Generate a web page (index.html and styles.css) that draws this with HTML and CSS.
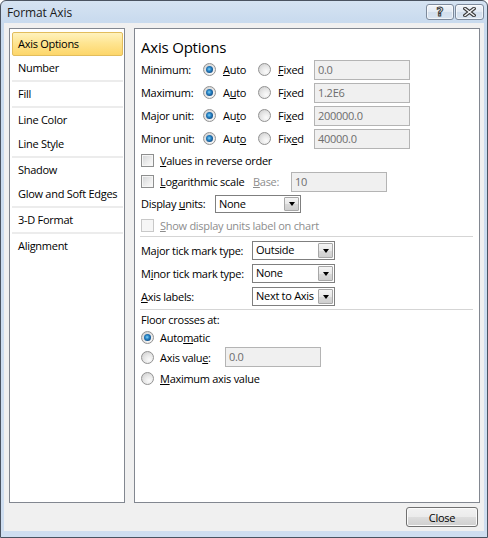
FILE: index.html
```html
<!DOCTYPE html>
<html>
<head>
<meta charset="utf-8">
<title>Format Axis</title>
<link rel="stylesheet" href="styles.css">
</head>
<body>
<div class="window">
  <div class="titlebar">
    <span class="title">Format Axis</span>
    <div class="caption-btns">
      <div class="cbtn help"><span class="qmark">?</span></div>
      <div class="cbtn closex">
        <svg width="13" height="10" viewBox="0 0 13 10">
          <path d="M2 1.5 L11 8.5 M11 1.5 L2 8.5" stroke="#3b3b3b" stroke-width="3.6" stroke-linecap="square" fill="none"/>
          <path d="M2 1.5 L11 8.5 M11 1.5 L2 8.5" stroke="#f4f6f9" stroke-width="1.4" stroke-linecap="square" fill="none"/>
        </svg>
      </div>
    </div>
  </div>
  <div class="client">
    <div class="panels">
      <div class="nav">
        <div class="item selected">Axis Options</div>
        <div class="item">Number</div>
        <div class="nsep"></div>
        <div class="item">Fill</div>
        <div class="nsep"></div>
        <div class="item">Line Color</div>
        <div class="item">Line Style</div>
        <div class="nsep"></div>
        <div class="item">Shadow</div>
        <div class="item">Glow and Soft Edges</div>
        <div class="nsep"></div>
        <div class="item">3-D Format</div>
        <div class="nsep"></div>
        <div class="item">Alignment</div>
      </div>
      <div class="content">
        <div class="heading">Axis Options</div>

        <div class="arow">
          <span class="alabel">Minimum:</span>
          <span class="opt auto"><span class="radio checked"></span><span><u>A</u>uto</span></span>
          <span class="opt fixed"><span class="radio"></span><span><u>F</u>ixed</span></span>
          <span class="field">0.0</span>
        </div>
        <div class="arow">
          <span class="alabel">Maximum:</span>
          <span class="opt auto"><span class="radio checked"></span><span>A<u>u</u>to</span></span>
          <span class="opt fixed"><span class="radio"></span><span>F<u>i</u>xed</span></span>
          <span class="field">1.2E6</span>
        </div>
        <div class="arow">
          <span class="alabel">Major unit:</span>
          <span class="opt auto"><span class="radio checked"></span><span>Au<u>t</u>o</span></span>
          <span class="opt fixed"><span class="radio"></span><span>Fi<u>x</u>ed</span></span>
          <span class="field">200000.0</span>
        </div>
        <div class="arow">
          <span class="alabel">Minor unit:</span>
          <span class="opt auto"><span class="radio checked"></span><span>Aut<u>o</u></span></span>
          <span class="opt fixed"><span class="radio"></span><span>Fix<u>e</u>d</span></span>
          <span class="field">40000.0</span>
        </div>

        <div class="crow">
          <span class="check"></span><span class="ctext"><u>V</u>alues in reverse order</span>
        </div>
        <div class="crow">
          <span class="check"></span><span class="ctext log"><u>L</u>ogarithmic scale</span>
          <span class="base disabled"><u>B</u>ase:</span>
          <span class="field">10</span>
        </div>
        <div class="drow">
          <span class="dlabel">Display <u>u</u>nits:</span>
          <span class="combo units"><span class="val">None</span><span class="arrow"><span class="tri"></span></span></span>
        </div>
        <div class="srow">
          <span class="check off"></span><span class="ctext disabled"><u>S</u>how display units label on chart</span>
        </div>

        <div class="sep first"></div>

        <div class="trow">
          <span class="tlabel">Ma<u>j</u>or tick mark type:</span>
          <span class="combo tick"><span class="val">Outside</span><span class="arrow"><span class="tri"></span></span></span>
        </div>
        <div class="trow">
          <span class="tlabel">M<u>i</u>nor tick mark type:</span>
          <span class="combo tick"><span class="val">None</span><span class="arrow"><span class="tri"></span></span></span>
        </div>
        <div class="trow">
          <span class="tlabel"><u>A</u>xis labels:</span>
          <span class="combo tick"><span class="val">Next to Axis</span><span class="arrow"><span class="tri"></span></span></span>
        </div>

        <div class="sep second"></div>

        <div class="frow floor">Floor crosses at:</div>
        <div class="frow r1"><span class="radio checked"></span><span class="ftext">Auto<u>m</u>atic</span></div>
        <div class="frow r2"><span class="radio"></span><span class="ftext vlabel">Axis valu<u>e</u>:</span><span class="field">0.0</span></div>
        <div class="frow r3"><span class="radio"></span><span class="ftext"><u>M</u>aximum axis value</span></div>
      </div>
    </div>
    <div class="footer">
      <button class="btn">Close</button>
    </div>
  </div>
</div>
</body>
</html>
```
FILE: styles.css
```css
html, body {
  margin: 0;
  padding: 0;
}
body {
  width: 488px;
  height: 538px;
  overflow: hidden;
  background: #ffffff;
  font-family: "Open Sans", "Noto Sans", sans-serif;
  font-size: 11px;
  letter-spacing: -0.28px;
  color: #000;
}
u { text-decoration: underline; text-underline-offset: 1px; }

.window {
  box-sizing: border-box;
  width: 488px;
  height: 538px;
  border: 1px solid #4a5360;
  border-radius: 6px 6px 0 0;
  background: linear-gradient(#d5e3f2 0, #c8daee 22px, #cfdef0 100%);
  display: flex;
  flex-direction: column;
}
.titlebar {
  height: 22px;
  flex: none;
  display: flex;
  align-items: center;
  justify-content: space-between;
  padding: 0 3px 0 6px;
}
.title {
  font-size: 12px;
  letter-spacing: -0.1px;
  color: #1a1a1a;
}
.caption-btns {
  display: flex;
  gap: 1px;
}
.cbtn {
  box-sizing: border-box;
  height: 16px;
  border: 1px solid #7d8a9c;
  border-radius: 3px;
  background: linear-gradient(#f1f5fa 0, #e2eaf4 50%, #d3dfed 51%, #dae5f2 100%);
  box-shadow: inset 0 0 0 1px rgba(255,255,255,0.6);
  display: flex;
  align-items: center;
  justify-content: center;
}
.help { width: 28px; }
.closex { width: 29px; }
.qmark {
  font-family: "DejaVu Sans", sans-serif;
  font-weight: bold;
  font-size: 12px;
  line-height: 12px;
  letter-spacing: 0;
  color: #f4f6f9;
  -webkit-text-stroke: 1px #3b3b3b;
}

.client {
  flex: 1;
  margin: 0 3px 6px 3px;
  background: #f0f0f0;
  padding: 5px 4px 0 5px;
  display: flex;
  flex-direction: column;
}
.panels {
  height: 475px;
  display: flex;
  gap: 9px;
}
.nav {
  box-sizing: border-box;
  width: 116px;
  border: 1px solid #828790;
  background: #fff;
  padding: 3px 1px 0 2px;
}
.item {
  box-sizing: border-box;
  height: 24px;
  line-height: 22px;
  border: 1px solid transparent;
  border-radius: 2px;
  padding-left: 5px;
  white-space: nowrap;
}
.item.selected {
  border-color: #e2bd5c;
  background: linear-gradient(#fff2bd 0, #fee592 45%, #fdd66a 100%);
}
.nsep {
  height: 2px;
  background: #ececec;
}

.content {
  box-sizing: border-box;
  flex: 1;
  border: 1px solid #828790;
  background: #fff;
  padding: 8px 0 0 6px;
}
.heading {
  font-size: 15px;
  letter-spacing: -0.2px;
  line-height: 21px;
  height: 21px;
}

.radio {
  position: relative;
  box-sizing: border-box;
  flex: none;
  width: 13px;
  height: 13px;
  border-radius: 50%;
  border: 1px solid #929292;
  background: radial-gradient(circle at 65% 70%, #fbfbfb 0, #e8e8e8 45%, #c9c9c9 100%);
}
.radio.checked::after {
  content: "";
  position: absolute;
  left: 2px;
  top: 2px;
  width: 7px;
  height: 7px;
  border-radius: 50%;
  background: radial-gradient(circle at 45% 45%, #84d4f6 0, #2b86c7 35%, #0d4a84 75%, #3b6f9c 100%);
}

.arow {
  display: flex;
  align-items: center;
  height: 23px;
}
.alabel { width: 62px; flex: none; }
.opt {
  display: flex;
  align-items: center;
  gap: 7px;
  flex: none;
}
.opt.auto { width: 55px; }
.opt.fixed { width: 56px; }

.field {
  box-sizing: border-box;
  display: block;
  flex: none;
  width: 96px;
  height: 20px;
  line-height: 18px;
  border: 1px solid #b4b4b4;
  background: #f0f0f0;
  color: #6d6d6d;
  padding-left: 3px;
}

.check {
  box-sizing: border-box;
  flex: none;
  width: 13px;
  height: 13px;
  border: 1px solid #8e8f8f;
  background: linear-gradient(135deg, #d2d4d6 0, #eeeeee 60%, #fbfbfb 100%);
  box-shadow: inset 0 0 0 1px #f6f6f6;
}
.check.off {
  border-color: #c8c8c8;
  background: #f6f6f6;
  box-shadow: none;
}
.crow {
  display: flex;
  align-items: center;
  height: 21px;
}
.ctext { margin-left: 6px; }
.ctext.log { width: 93px; flex: none; }
.base { width: 38px; flex: none; }
.disabled { color: #8d8d8d; }

.drow {
  display: flex;
  align-items: center;
  height: 23px;
}
.dlabel { width: 74px; flex: none; }
.srow {
  display: flex;
  align-items: center;
  height: 20px;
}

.combo {
  box-sizing: border-box;
  display: flex;
  flex: none;
  height: 19px;
  border: 1px solid #7f7f7f;
  background: #fff;
}
.combo.units { width: 86px; height: 18px; }
.combo.tick { width: 83px; }
.val {
  flex: 1;
  padding-left: 3px;
  line-height: 16px;
  white-space: nowrap;
  overflow: hidden;
}
.arrow {
  box-sizing: border-box;
  flex: none;
  width: 15px;
  margin: 1px;
  border: 1px solid #a7a7a7;
  border-radius: 1px;
  background: linear-gradient(#f4f4f4 0, #e8e8e8 50%, #d9d9d9 51%, #cfcfcf 100%);
  display: flex;
  align-items: center;
  justify-content: center;
}
.tri {
  width: 0;
  height: 0;
  border-left: 3.5px solid transparent;
  border-right: 3.5px solid transparent;
  border-top: 4px solid #000;
  margin-top: 1px;
}

.sep {
  height: 1px;
  background: #d5d5d5;
  margin-left: -1px;
  margin-right: 6px;
}
.sep.first { margin-top: 1px; margin-bottom: 2px; }
.sep.second { margin-top: 1px; margin-bottom: 1px; }

.trow {
  display: flex;
  align-items: center;
  height: 23px;
}
.tlabel { width: 111px; flex: none; }

.frow {
  display: flex;
  align-items: center;
}
.frow.floor { height: 17px; }
.frow.r1 { height: 18px; }
.frow.r2 { height: 22px; }
.frow.r3 { height: 20px; }
.ftext { margin-left: 6px; }
.vlabel { width: 65px; flex: none; }

.footer {
  display: flex;
  justify-content: flex-end;
  padding: 4px 2px 0 0;
}
.btn {
  box-sizing: border-box;
  width: 72px;
  height: 20px;
  padding: 0;
  border: 1px solid #707070;
  border-radius: 3px;
  background: linear-gradient(#f2f2f2 0, #ebebeb 50%, #dddddd 51%, #cfcfcf 100%);
  box-shadow: inset 0 0 0 1px #fbfbfb;
  font-family: "Open Sans", "Noto Sans", sans-serif;
  font-size: 11px;
  letter-spacing: -0.28px;
  color: #000;
}
```
